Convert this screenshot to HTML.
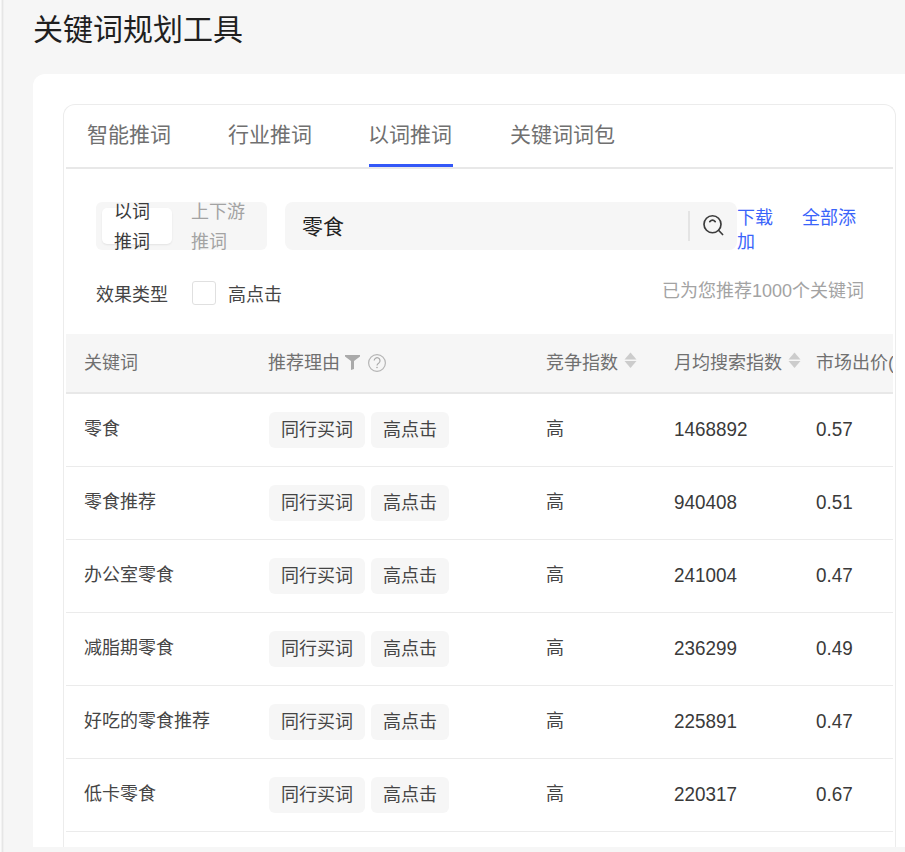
<!DOCTYPE html>
<html lang="zh-CN">
<head>
<meta charset="utf-8">
<style>
*{margin:0;padding:0;box-sizing:border-box;}
html,body{width:905px;height:852px;overflow:hidden;background:#f6f6f6;}
body{position:relative;font-family:"Liberation Sans",sans-serif;color:#333;}
.abs{position:absolute;white-space:nowrap;}
.vline{position:absolute;left:0;top:0;width:4px;height:852px;background:linear-gradient(90deg,#fbfbfb 0,#fbfbfb 1px,#f2f2f2 1px,#f2f2f2 2px,#e6e6e6 2px,#e6e6e6 3px,#f0f0f0 3px,#f0f0f0 4px);}
.title{left:33px;top:10px;font-size:30px;line-height:40px;color:#1f1f1f;}
.card{position:absolute;left:33px;top:74px;width:900px;height:773px;background:#fff;border-radius:12px 0 0 0;}
.inner{position:absolute;left:63px;top:104px;width:833px;height:743px;border:1px solid #ececec;border-bottom:none;border-radius:12px 12px 0 0;}
.tab{font-size:21px;line-height:28px;color:#707070;top:121px;}
.tabline{position:absolute;left:66px;top:167px;width:827px;height:2px;background:#e8e8e8;}
.tabact{position:absolute;left:369px;top:164px;width:84px;height:3px;background:#3358f8;}
.seg{position:absolute;left:96px;top:202px;width:171px;height:48px;background:#f6f6f6;border-radius:6px;overflow:hidden;}
.segsel{position:absolute;left:102px;top:208px;width:70px;height:36px;background:#fff;border-radius:5px;box-shadow:0 1px 2px rgba(0,0,0,.08);}
.segt{font-size:18px;line-height:30px;}
.search{position:absolute;left:285px;top:202px;width:452px;height:48px;background:#f6f6f6;border-radius:8px;}
.sdiv{position:absolute;left:688px;top:211px;width:2px;height:30px;background:#e4e4e4;}
.link{font-size:18px;line-height:24px;color:#3a64fa;}
.f18{font-size:18px;line-height:24px;}
.chk{position:absolute;left:192px;top:281px;width:24px;height:24px;border:1px solid #e0e0e0;border-radius:3px;background:#fff;}
.thead{position:absolute;left:66px;top:334px;width:827px;height:60px;background:#f6f6f6;border-bottom:2px solid #e8e8e8;}
.th{font-size:18px;line-height:24px;color:#707070;top:351px;}
.row{position:absolute;left:66px;width:827px;height:1px;background:#ebebeb;}
.td{font-size:18px;line-height:24px;color:#454545;}
.num{font-size:19.5px;line-height:24px;color:#3a3a3a;transform:scaleX(0.967);transform-origin:0 0;}
.tag{position:absolute;height:36px;background:#f6f6f6;border-radius:6px;font-size:18px;line-height:36px;color:#454545;padding:0 12px;white-space:nowrap;}
</style>
</head>
<body>
<div class="vline"></div>
<div class="abs title">关键词规划工具</div>
<div class="card"></div>
<div class="inner"></div>

<div class="abs tab" style="left:87px">智能推词</div>
<div class="abs tab" style="left:228px">行业推词</div>
<div class="abs tab" style="left:368px">以词推词</div>
<div class="abs tab" style="left:510px">关键词词包</div>
<div class="tabline"></div>
<div class="tabact"></div>

<div class="seg"></div>
<div class="segsel"></div>
<div class="abs segt" style="left:114px;top:196.5px;color:#3a3a3a">以词<br>推词</div>
<div class="abs segt" style="left:191px;top:196.5px;color:#a3a3a3">上下游<br>推词</div>

<div class="search"></div>
<div class="abs" style="left:302px;top:213px;font-size:21px;line-height:28px;color:#222">零食</div>
<div class="sdiv"></div>
<svg class="abs" style="left:700px;top:212px" width="28" height="28" viewBox="0 0 28 28">
  <circle cx="12.5" cy="12.25" r="8.5" fill="none" stroke="#3c3c3c" stroke-width="1.7"/>
  <path d="M9.8 9.6 Q12.5 6.7 15.2 9.6" fill="none" stroke="#3c3c3c" stroke-width="1.7" stroke-linecap="round"/>
  <path d="M18.5 18.25 L22.6 22.5" stroke="#3c3c3c" stroke-width="1.7" stroke-linecap="round"/>
</svg>
<div class="abs link" style="left:737px;top:206px">下载<br>加</div>
<div class="abs link" style="left:802px;top:206px">全部添</div>

<div class="abs f18" style="left:96px;top:283px;color:#454545">效果类型</div>
<div class="chk"></div>
<div class="abs f18" style="left:228px;top:283px;color:#454545">高点击</div>
<div class="abs f18" style="left:662px;top:279px;color:#a3a3a3">已为您推荐1000个关键词</div>

<div class="clip" style="position:absolute;left:0;top:0;width:893px;height:852px;overflow:hidden">
<div class="thead"></div>
<div class="abs th" style="left:84px">关键词</div>
<div class="abs th" style="left:268px">推荐理由</div>
<svg class="abs" style="left:344px;top:354px" width="17" height="17" viewBox="0 0 17 17"><path d="M1 1 H16 V2.5 L10 7 V15 L7 16 V7 L1 2.5 Z" fill="#aaa"/></svg>
<svg class="abs" style="left:367px;top:353px" width="20" height="20" viewBox="0 0 20 20"><circle cx="10" cy="10" r="8.4" fill="none" stroke="#b5b5b5" stroke-width="1.2"/><path d="M7.2 7.6 A2.9 2.9 0 1 1 11.9 9.9 Q10 11 10 12.6" fill="none" stroke="#aaa" stroke-width="1.2"/><circle cx="10" cy="14.5" r="0.8" fill="#aaa"/></svg>
<div class="abs th" style="left:546px">竞争指数</div>
<svg class="abs" style="left:624px;top:352px" width="13" height="17" viewBox="0 0 13 17"><path d="M6.5 0.5 L12.5 7.5 H0.5 Z" fill="#ccc"/><path d="M0.5 9 H12.5 L6.5 16 Z" fill="#ccc"/></svg>
<div class="abs th" style="left:674px">月均搜索指数</div>
<svg class="abs" style="left:788px;top:352px" width="13" height="17" viewBox="0 0 13 17"><path d="M6.5 0.5 L12.5 7.5 H0.5 Z" fill="#ccc"/><path d="M0.5 9 H12.5 L6.5 16 Z" fill="#ccc"/></svg>
<div class="abs th" style="left:816px">市场出价(</div>

<!-- rows -->
<div class="abs td" style="left:84px;top:417px">零食</div>
<div class="tag" style="left:269px;top:412px">同行买词</div>
<div class="tag" style="left:371px;top:412px">高点击</div>
<div class="abs td" style="left:546px;top:417px">高</div>
<div class="abs num" style="left:674px;top:417px">1468892</div>
<div class="abs num" style="left:816px;top:417px">0.57</div>
<div class="row" style="top:466px"></div>
<div class="abs td" style="left:84px;top:490px">零食推荐</div>
<div class="tag" style="left:269px;top:485px">同行买词</div>
<div class="tag" style="left:371px;top:485px">高点击</div>
<div class="abs td" style="left:546px;top:490px">高</div>
<div class="abs num" style="left:674px;top:490px">940408</div>
<div class="abs num" style="left:816px;top:490px">0.51</div>
<div class="row" style="top:539px"></div>
<div class="abs td" style="left:84px;top:563px">办公室零食</div>
<div class="tag" style="left:269px;top:558px">同行买词</div>
<div class="tag" style="left:371px;top:558px">高点击</div>
<div class="abs td" style="left:546px;top:563px">高</div>
<div class="abs num" style="left:674px;top:563px">241004</div>
<div class="abs num" style="left:816px;top:563px">0.47</div>
<div class="row" style="top:612px"></div>
<div class="abs td" style="left:84px;top:636px">减脂期零食</div>
<div class="tag" style="left:269px;top:631px">同行买词</div>
<div class="tag" style="left:371px;top:631px">高点击</div>
<div class="abs td" style="left:546px;top:636px">高</div>
<div class="abs num" style="left:674px;top:636px">236299</div>
<div class="abs num" style="left:816px;top:636px">0.49</div>
<div class="row" style="top:685px"></div>
<div class="abs td" style="left:84px;top:709px">好吃的零食推荐</div>
<div class="tag" style="left:269px;top:704px">同行买词</div>
<div class="tag" style="left:371px;top:704px">高点击</div>
<div class="abs td" style="left:546px;top:709px">高</div>
<div class="abs num" style="left:674px;top:709px">225891</div>
<div class="abs num" style="left:816px;top:709px">0.47</div>
<div class="row" style="top:758px"></div>
<div class="abs td" style="left:84px;top:782px">低卡零食</div>
<div class="tag" style="left:269px;top:777px">同行买词</div>
<div class="tag" style="left:371px;top:777px">高点击</div>
<div class="abs td" style="left:546px;top:782px">高</div>
<div class="abs num" style="left:674px;top:782px">220317</div>
<div class="abs num" style="left:816px;top:782px">0.67</div>
<div class="row" style="top:831px"></div>
</div>
</body>
</html>
